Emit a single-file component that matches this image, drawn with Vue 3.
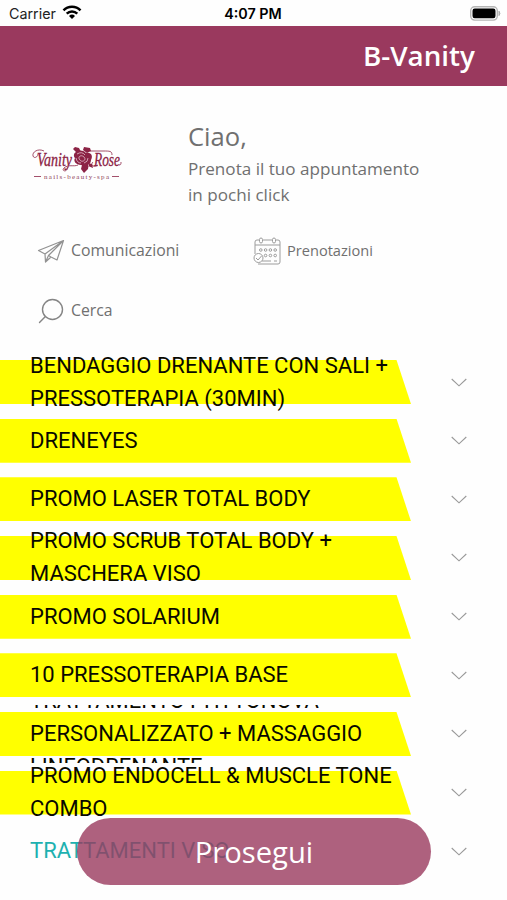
<script setup>
const services = [
  { title: 'BENDAGGIO DRENANTE CON SALI + PRESSOTERAPIA (30MIN)', promo: true },
  { title: 'DRENEYES', promo: true },
  { title: 'PROMO LASER TOTAL BODY', promo: true },
  { title: 'PROMO SCRUB TOTAL BODY + MASCHERA VISO', promo: true },
  { title: 'PROMO SOLARIUM', promo: true },
  { title: '10 PRESSOTERAPIA BASE', promo: true },
  { title: 'TRATTAMENTO PHYTONOVA PERSONALIZZATO + MASSAGGIO LINFODRENANTE', promo: true },
  { title: 'PROMO ENDOCELL & MUSCLE TONE COMBO', promo: true },
  { title: 'TRATTAMENTI VISO', promo: false },
]
</script>

<template>
  <main class="screen">
    <div class="status">
      <div class="carrier">
        <span>Carrier</span>
        <svg width="20" height="15" viewBox="0 0 20 15" fill="none" stroke="#000" stroke-width="2.5">
          <path d="M1.5 5.4C6.2.5 13.800.5 18.500 5.400" />
          <path d="M4.700 8.600C7.700 5.700 12.300 5.700 15.300 8.600" />
          <path d="M7 10.900Q10 8.300 13 10.900L10 14Z" fill="#000" stroke="none" />
        </svg>
      </div>
      <span class="clock">4:07 PM</span>
      <div class="power">
        <svg width="31" height="15" viewBox="0 0 31 15">
          <rect x=".7" y=".7" width="26.600" height="13.400" rx="4" fill="#fff" stroke="#b5b5b5" stroke-width="1.400" />
          <rect x="2.500" y="2.500" width="23" height="9.800" rx="2.200" fill="#000" />
          <path d="M29 5.200Q30.800 7.400 29 9.600Z" fill="#aaa" stroke="#aaa" />
        </svg>
      </div>
    </div>

    <header class="bar"><h1>B-Vanity</h1></header>

    <section class="welcome">
      <svg class="logo" width="92" height="36" viewBox="0 0 92 36" fill="none" stroke="#8c2345">
        <g font-family="Liberation Serif, serif" font-style="italic" font-weight="400" font-size="18" fill="#8c2345" stroke="#8c2345" stroke-width=".3">
          <text x="5" y="20" textLength="35" lengthAdjust="spacingAndGlyphs">Vanity</text>
          <text x="62" y="20" textLength="26" lengthAdjust="spacingAndGlyphs">Rose</text>
        </g>
        <path d="M12 5C6 2 0 6 1 10c1 3 5 1 5-2M36 21c-1 6-7 4-4 1 4-4 10-1 14-3M58 5h13c7 0 9 0 9 4M66 19c-5 3-8 0-5-3M87 19c2 0 2-1 2-3" stroke-width=".8" />
        <path d="M44 6l-3-3 2-2 4 1 2 4zM51 4l1-3 6 1 1 3-4 2zM50 19l-1 4 3 4 4-4 1-6zM56 17l4 1 1 4-5-2z" fill="#8c2345" stroke="none" />
        <path d="M44 6c3-2 7-2 10 1 6-1 7 4 5 7 0 5-6 7-10 5-5 0-8-4-6-7-2-2-1-5 1-6z" fill="#8c2345" stroke="none" />
        <path d="M45 8q5-3 8 1M48 14c-3-3 1-6 4-3 3 3-2 6-4 3M44 12q1 5 5 5M52 17q4-1 4-5" stroke="#eed7df" stroke-width=".7" />
        <path d="M2 30.500h7M80 30.500h7" stroke-width=".8" />
        <text x="12" y="32.500" textLength="65" font-family="Liberation Serif, serif" font-size="7" fill="#8f4259" stroke="none">nails-beauty-spa</text>
      </svg>
      <div class="greeting">
        <h2>Ciao,</h2>
        <p>Prenota il tuo appuntamento<br />in pochi click</p>
      </div>
    </section>

    <nav class="shortcuts">
      <a class="shortcut">
        <svg width="28" height="28" viewBox="0 0 28 28" fill="none" stroke="#929292" stroke-width="1.200" stroke-linejoin="round">
          <path d="M1.500 13.500L26.500 3.500L20 23L14 20L8.500 25L8 17ZM26.500 3.500L8 17M26.500 3.500L11.500 18.500L8.500 25M11.500 18.500L14 20" />
        </svg>
        <span>Comunicazioni</span>
      </a>
      <a class="shortcut calendar">
        <svg width="28" height="28" viewBox="0 0 28 28" fill="none" stroke="#9c9c9c" stroke-width="1">
          <path d="M2 17V5Q2 3 4 3H6M10 3H19M23 3H25Q27 3 27 5V25Q27 27 25 27H5M2 8H27M9 24H18M21 24H24" />
          <rect x="6.500" y="1" width="3" height="5" rx="1.500" />
          <rect x="19.500" y="1" width="3" height="5" rx="1.500" />
          <g>
            <circle v-for="n in 4" :key="'a' + n" :cx="3 + n * 4.800" cy="13" r="1.300" />
            <circle v-for="n in 3" :key="'b' + n" :cx="7.800 + n * 4.800" cy="18.500" r="1.300" />
          </g>
          <circle cx="5.500" cy="21" r="4.500" fill="#fff" />
          <path d="M3 21L5 23L8.500 19" />
        </svg>
        <span>Prenotazioni</span>
      </a>
      <a class="shortcut">
        <svg width="28" height="28" viewBox="0 0 28 28" fill="none" stroke="#858585" stroke-width="1.400" stroke-linecap="round">
          <circle cx="15.500" cy="12.500" r="10" /><path d="M8.400 19.600L2.500 25.500" />
        </svg>
        <span>Cerca</span>
      </a>
    </nav>

    <section class="services">
      <div v-for="item in services" :key="item.title" class="row">
        <div v-if="item.promo" class="ribbon"></div>
        <h3 :class="{ plain: !item.promo }">{{ item.title }}</h3>
        <svg class="chevron" width="16" height="9" viewBox="0 0 16 9" fill="none" stroke="#999" stroke-width="1.100">
          <path d="M.7 1L8 7.800L15.300 1" />
        </svg>
      </div>
    </section>

    <button class="proceed">Prosegui</button>
  </main>
</template>

<style>
body { margin: 0; background: #fff; }
</style>

<style scoped>
.screen {
  position: relative;
  display: flex;
  flex-direction: column;
  width: 507px;
  height: 900px;
  overflow: hidden;
  background: #fefefe;
  color: #707070;
  font-family: "Open Sans", "Noto Sans", sans-serif;
}
h1, h2, h3, p { margin: 0; font-weight: 400; }
.status {
  display: grid;
  grid-template-columns: 1fr auto 1fr;
  align-items: center;
  flex: none;
  box-sizing: border-box;
  height: 26px;
  padding: 1px 6px 0 9px;
  font: 14.300px Inter, sans-serif;
  color: #222;
}
.carrier { display: flex; align-items: center; gap: 6px; }
.carrier svg { margin-top: -2px; }
.clock { font-weight: 600; color: #000; margin-right: 4px; }
.power { display: flex; justify-content: flex-end; }
.power svg { margin-top: -1px; }
.bar {
  display: flex;
  align-items: center;
  justify-content: flex-end;
  flex: none;
  box-sizing: border-box;
  height: 60px;
  padding: 0 32px 3px 0;
  background: #9a395e;
}
.bar h1 { font-size: 27.800px; font-weight: 600; color: #fff; }
.welcome { display: flex; flex: none; height: 146px; }
.logo { flex: none; margin: 60px 64px 0 32px; }
.greeting { padding-top: 33px; }
.greeting h2 { font-size: 25.600px; line-height: 36px; }
.greeting p { padding-top: 1px; font-size: 17.100px; line-height: 25.500px; white-space: nowrap; }
.shortcuts {
  display: grid;
  grid-template-columns: 216px 216px;
  grid-auto-rows: 60px;
  flex: none;
  height: 120.700px;
  padding: 0 0 0 37px;
}
.shortcut { display: flex; align-items: center; align-self: start; gap: 6px; height: 38px; font-size: 15.800px; }
.shortcut span { margin-top: -2px; }
.calendar { font-size: 14.600px; }
.shortcut svg { flex: none; }
.services { flex: none; }
.row {
  display: grid;
  grid-template: 58.660px / 30px 370px 1fr;
  align-items: center;
  height: 58.660px;
  overflow: hidden;
}
.ribbon {
  grid-area: 1 / 1 / 2 / 4;
  width: 411px;
  height: 44px;
  background: #ff0;
  clip-path: polygon(0 0, 396.500px 0, 100% 100%, 0 100%);
}
.row h3 {
  grid-area: 1 / 2;
  z-index: 1;
  align-self: center;
  margin-bottom: 1px;
  font: 400 22px / 33px Roboto, sans-serif;
  color: #090900;
}
.row h3.plain { color: #1db1b0; }
.chevron { grid-area: 1 / 3; margin-left: 51px; }
.proceed {
  position: absolute;
  z-index: 2;
  left: 77px;
  bottom: 15px;
  width: 354px;
  height: 67px;
  padding: 1px 0 0;
  border: 0;
  border-radius: 34px;
  background: rgba(154, 57, 94, .8);
  color: #fff;
  font: 29.200px "Open Sans", "Noto Sans", sans-serif;
}
</style>
